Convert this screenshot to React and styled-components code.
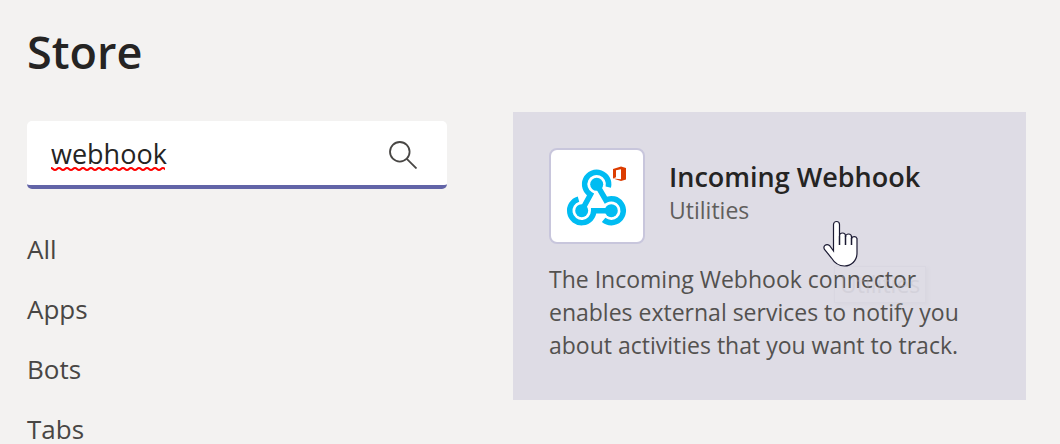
import React from "react";
import styled, { createGlobalStyle } from "styled-components";

const GlobalStyle = createGlobalStyle`
  * { box-sizing: border-box; }
  body {
    margin: 0;
    background: #f3f2f1;
    color: #252423;
    font-family: "Segoe UI", "Open Sans", "Noto Sans", sans-serif;
    overflow: hidden;
  }
`;

const Page = styled.div`
  padding: 24px 34px 0 27px;
`;

const Heading = styled.h1`
  margin: 0 0 32px;
  font-size: 45px;
  line-height: 56px;
  font-weight: 600;
`;

const Columns = styled.div`
  display: grid;
  grid-template-columns: minmax(0, 420fr) minmax(0, 513fr);
  column-gap: 66px;
  align-items: start;
`;

const Sidebar = styled.aside`
  padding-top: 9px;
`;

const SearchBox = styled.label`
  position: relative;
  display: flex;
  align-items: center;
  height: 68px;
  padding: 2px 30px 0 24px;
  background: #fff;
  border-bottom: 4px solid #6264a7;
  border-radius: 5px;
`;

const SearchInput = styled.input`
  flex: 1;
  min-width: 0;
  padding: 0;
  border: 0;
  outline: 0;
  background: transparent;
  color: #252423;
  font-family: inherit;
  font-size: 27px;
  line-height: 36px;
`;

const SearchGlyph = styled.svg`
  flex: none;
  width: 28px;
  height: 30px;
`;

const Squiggle = styled.svg`
  position: absolute;
  left: 24px;
  bottom: 13px;
  width: 114px;
  height: 5px;
`;

const FilterList = styled.ul`
  list-style: none;
  margin: 30px 0 0;
  padding: 0;
`;

const FilterLink = styled.a`
  display: block;
  color: #484644;
  font-size: 26px;
  line-height: 60px;
  text-decoration: none;
`;

const Card = styled.article`
  position: relative;
  padding: 36px 36px 38px;
  background: #dedce5;
`;

const CardHeader = styled.header`
  display: flex;
  align-items: center;
  gap: 24px;
  margin-bottom: 19px;
`;

const LogoTile = styled.div`
  flex: none;
  display: flex;
  width: 96px;
  height: 96px;
  border: 2px solid #c8c6dc;
  border-radius: 8px;
  background: #fff;
`;

const CardText = styled.div`
  padding-bottom: 5px;
`;

const CardTitle = styled.h2`
  margin: 0;
  font-size: 27px;
  line-height: 34px;
  font-weight: 600;
`;

const Category = styled.div`
  color: #605e5c;
  font-size: 23px;
  line-height: 33px;
`;

const Description = styled.p`
  margin: 0;
  color: #53514f;
  font-size: 23px;
  line-height: 33px;
`;

const Tooltip = styled.div`
  position: absolute;
  left: 321px;
  top: 154px;
  padding: 0 5px;
  border: 1px solid #d2d0da;
  box-shadow: 2px 2px 3px #d2d0da;
  color: #c0bec8;
  font-size: 23px;
  line-height: 35px;
  opacity: 0.35;
`;

const Pointer = styled.svg`
  position: absolute;
  left: 310px;
  top: 108px;
  width: 36px;
  height: 48px;
`;

function WebhookLogo() {
  return (
    <svg width="92" height="92" viewBox="0 0 92 92" fill="none" aria-hidden="true">
      <g stroke="#00bcf2" strokeWidth="5.500">
        <path d="M57.300 37.200A12 12 0 1 0 39.500 44.600L30.700 60.700" />
        <path d="M27.500 49.100A12 12 0 1 0 42.700 60.700H60.300" />
        <path d="M52.600 69.900A12 12 0 1 0 54.800 50L45.700 34.300" />
      </g>
      <g fill="#00bcf2">
        <circle cx="45.700" cy="34.300" r="6.500" />
        <circle cx="30.700" cy="60.700" r="6.500" />
        <circle cx="60.300" cy="60.700" r="6.500" />
      </g>
      <path
        fill="#dc3c00"
        fillRule="evenodd"
        d="M62 19L70 16.500L75 18V29.500L70 31L62 28.500L70 29.300V19.200L65 20.300V27.300L62 28.500Z"
      />
    </svg>
  );
}

function SearchIcon() {
  return (
    <SearchGlyph viewBox="0 0 28 30" fill="none" stroke="#484644" strokeWidth="1.800" aria-hidden="true">
      <circle cx="10.800" cy="12.800" r="9.800" />
      <path d="M17.800 19.800L27.500 29.500" />
    </SearchGlyph>
  );
}

const wave = "M0 1" + Array.from({ length: 15 }, () => "c2 0 2 2 4 2s2 -2 4 -2").join("");

export default function App() {
  return (
    <Page>
      <GlobalStyle />
      <Heading>Store</Heading>
      <Columns>
        <Sidebar>
          <SearchBox>
            <SearchInput type="text" aria-label="Search" defaultValue="webhook" spellCheck={false} />
            <Squiggle viewBox="0 0 114 5" fill="none" stroke="#f00" strokeWidth="2" aria-hidden="true">
              <path d={wave} />
            </Squiggle>
            <SearchIcon />
          </SearchBox>
          <nav>
            <FilterList>
              {["All", "Apps", "Bots", "Tabs"].map((name) => (
                <li key={name}>
                  <FilterLink href="#">{name}</FilterLink>
                </li>
              ))}
            </FilterList>
          </nav>
        </Sidebar>
        <Card>
          <CardHeader>
            <LogoTile>
              <WebhookLogo />
            </LogoTile>
            <CardText>
              <CardTitle>Incoming Webhook</CardTitle>
              <Category>Utilities</Category>
            </CardText>
          </CardHeader>
          <Description>
            The Incoming Webhook connector enables external services to notify you about activities that you want to track.
          </Description>
          <Tooltip role="tooltip">Utilities</Tooltip>
          <Pointer viewBox="0 0 36 48" aria-hidden="true">
            <path
              d="M10.500 31V4.500a3 3 0 0 1 6 0V16a3 3 0 0 1 6 0v1a3 3 0 0 1 6 0v1.500a3 3 0 0 1 5.500 0V33c0 8-6 13-12.500 13s-10-3-13-8L1.500 29.500c-2-4 2-6 5-4z"
              fill="#fff"
              stroke="#1b1a33"
              strokeWidth="1.200"
            />
            <path d="M16.500 16v9M22.500 16v9M28.500 18v7" stroke="#1b1a33" strokeWidth="1.500" />
          </Pointer>
        </Card>
      </Columns>
    </Page>
  );
}
